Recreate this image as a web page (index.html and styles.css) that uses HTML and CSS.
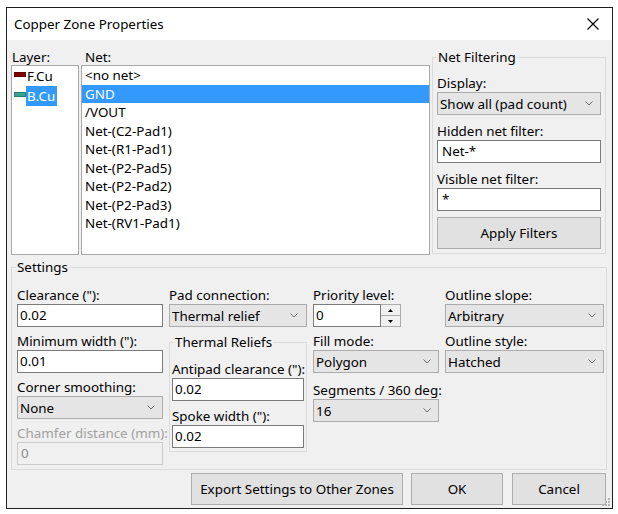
FILE: index.html
```html
<!DOCTYPE html>
<html>
<head>
<meta charset="utf-8">
<title>Copper Zone Properties</title>
<link rel="stylesheet" href="styles.css">
</head>
<body>
<div class="dialog">
  <div class="titlebar">
    <span class="title">Copper Zone Properties</span>
    <svg class="close" width="12" height="12" viewBox="0 0 12 12"><path d="M0.5 0.5 L11.5 11.5 M11.5 0.5 L0.5 11.5" stroke="#000" stroke-width="1.1" fill="none"/></svg>
  </div>
  <div class="content">
    <div class="top">
      <div class="layer-col">
        <div class="top-label">Layer:</div>
        <div class="listbox">
          <div class="layer-item"><span class="swatch swatch-f"></span><span class="layer-name">F.Cu</span></div>
          <div class="layer-item"><span class="swatch swatch-b"></span><span class="layer-name selected">B.Cu</span></div>
        </div>
      </div>
      <div class="net-col">
        <div class="top-label net-label">Net:</div>
        <div class="listbox">
          <div class="net-item">&lt;no net&gt;</div>
          <div class="net-item selected">GND</div>
          <div class="net-item">/VOUT</div>
          <div class="net-item">Net-(C2-Pad1)</div>
          <div class="net-item">Net-(R1-Pad1)</div>
          <div class="net-item">Net-(P2-Pad5)</div>
          <div class="net-item">Net-(P2-Pad2)</div>
          <div class="net-item">Net-(P2-Pad3)</div>
          <div class="net-item">Net-(RV1-Pad1)</div>
        </div>
      </div>
      <fieldset class="group netfilter">
        <legend>Net Filtering</legend>
        <div class="nf-inner">
          <div class="lbl">Display:</div>
          <div class="combo nf-ctrl"><span>Show all (pad count)</span><svg class="chev" width="8" height="5" viewBox="0 0 8 5"><polyline points="0.5,0.5 4,4 7.5,0.5" fill="none" stroke="#6b6b6b" stroke-width="1"/></svg></div>
          <div class="lbl">Hidden net filter:</div>
          <div class="input nf-input nf-ctrl">Net-*</div>
          <div class="lbl">Visible net filter:</div>
          <div class="input nf-input nf-ctrl">*</div>
          <div class="button apply">Apply Filters</div>
        </div>
      </fieldset>
    </div>

    <fieldset class="group settings">
      <legend>Settings</legend>
      <div class="settings-cols">
        <div class="col col1">
          <div class="lbl">Clearance ("):</div>
          <div class="input ctrl">0.02</div>
          <div class="lbl">Minimum width ("):</div>
          <div class="input ctrl">0.01</div>
          <div class="lbl">Corner smoothing:</div>
          <div class="combo ctrl"><span>None</span><svg class="chev" width="8" height="5" viewBox="0 0 8 5"><polyline points="0.5,0.5 4,4 7.5,0.5" fill="none" stroke="#6b6b6b" stroke-width="1"/></svg></div>
          <div class="lbl disabled">Chamfer distance (mm):</div>
          <div class="input ctrl input-disabled">0</div>
        </div>
        <div class="col col2">
          <div class="lbl">Pad connection:</div>
          <div class="combo ctrl"><span>Thermal relief</span><svg class="chev" width="8" height="5" viewBox="0 0 8 5"><polyline points="0.5,0.5 4,4 7.5,0.5" fill="none" stroke="#6b6b6b" stroke-width="1"/></svg></div>
          <fieldset class="group thermal">
            <legend>Thermal Reliefs</legend>
            <div class="thermal-inner">
              <div class="lbl">Antipad clearance ("):</div>
              <div class="input ctrl tr-ctrl">0.02</div>
              <div class="lbl">Spoke width ("):</div>
              <div class="input ctrl">0.02</div>
            </div>
          </fieldset>
        </div>
        <div class="col col3">
          <div class="lbl">Priority level:</div>
          <div class="spin ctrl">
            <div class="input spin-input">0</div>
            <div class="spin-btns">
              <div class="spin-half"><svg width="5" height="3" viewBox="0 0 5 3"><polygon points="2.5,0 5,3 0,3" fill="#000"/></svg></div>
              <div class="spin-half spin-down"><svg width="5" height="3" viewBox="0 0 5 3"><polygon points="0,0 5,0 2.5,3" fill="#000"/></svg></div>
            </div>
          </div>
          <div class="lbl">Fill mode:</div>
          <div class="combo ctrl fill-ctrl"><span>Polygon</span><svg class="chev" width="8" height="5" viewBox="0 0 8 5"><polyline points="0.5,0.5 4,4 7.5,0.5" fill="none" stroke="#6b6b6b" stroke-width="1"/></svg></div>
          <div class="lbl">Segments / 360 deg:</div>
          <div class="combo ctrl"><span>16</span><svg class="chev" width="8" height="5" viewBox="0 0 8 5"><polyline points="0.5,0.5 4,4 7.5,0.5" fill="none" stroke="#6b6b6b" stroke-width="1"/></svg></div>
        </div>
        <div class="col col4">
          <div class="lbl">Outline slope:</div>
          <div class="combo ctrl"><span>Arbitrary</span><svg class="chev" width="8" height="5" viewBox="0 0 8 5"><polyline points="0.5,0.5 4,4 7.5,0.5" fill="none" stroke="#6b6b6b" stroke-width="1"/></svg></div>
          <div class="lbl">Outline style:</div>
          <div class="combo ctrl"><span>Hatched</span><svg class="chev" width="8" height="5" viewBox="0 0 8 5"><polyline points="0.5,0.5 4,4 7.5,0.5" fill="none" stroke="#6b6b6b" stroke-width="1"/></svg></div>
        </div>
      </div>
    </fieldset>

    <div class="buttons">
      <div class="button btn-export">Export Settings to Other Zones</div>
      <div class="button btn-ok">OK</div>
      <div class="button btn-cancel">Cancel</div>
    </div>
  </div>
  <svg class="grip" width="10" height="10" viewBox="0 0 10 10">
    <rect x="7" y="1" width="2" height="2" fill="#b4b4b4"/>
    <rect x="7" y="4" width="2" height="2" fill="#b4b4b4"/>
    <rect x="4" y="4" width="2" height="2" fill="#b4b4b4"/>
    <rect x="7" y="7" width="2" height="2" fill="#b4b4b4"/>
    <rect x="4" y="7" width="2" height="2" fill="#b4b4b4"/>
    <rect x="1" y="7" width="2" height="2" fill="#b4b4b4"/>
  </svg>
</div>
</body>
</html>
```

FILE: styles.css
```css
* { box-sizing: border-box; }
html, body { margin: 0; padding: 0; background: #ffffff; }
body {
  font-family: "Noto Sans", "Open Sans", sans-serif;
  font-size: 13.4px;
  color: #000;
}

.dialog {
  position: relative;
  width: 607px;
  height: 502px;
  margin: 7px 0 0 6px;
  border: 1px solid #1f1f1f;
  background: #f0f0f0;
  display: flex;
  flex-direction: column;
}

.titlebar {
  flex: none;
  height: 32px;
  background: #ffffff;
  display: flex;
  align-items: center;
  justify-content: space-between;
  padding: 0 13px 0 7px;
}
.title { line-height: 18px; }
.close { display: block; }

.content {
  flex: 1;
  display: flex;
  flex-direction: column;
  padding: 9px 5px 0 4px;
}

.top {
  display: flex;
  gap: 2px;
  height: 206px;
  flex: none;
}
.layer-col, .net-col { display: flex; flex-direction: column; flex: none; }
.layer-col { width: 68px; }
.net-col { width: 349px; }
.top-label { height: 16px; line-height: 16px; padding-left: 1px; }
.net-label { padding-left: 4px; }

.listbox {
  flex: 1;
  background: #ffffff;
  border: 1px solid #a9a9a9;
  overflow: hidden;
}

.layer-item {
  display: flex;
  align-items: center;
  height: 20px;
  padding-left: 2px;
}
.swatch {
  width: 12px;
  height: 5px;
  margin-top: -3px;
  flex: none;
}
.swatch-f { background: #840000; border: 1px solid #5a0000; }
.swatch-b { background: #3aa08f; border: 1px solid #2b7f70; }
.layer-name { line-height: 20px; padding: 0 2px 0 1px; }
.layer-name.selected { background: #3399ff; color: #ffffff; }

.net-item {
  height: 18.5px;
  line-height: 18.5px;
  padding-left: 3px;
  white-space: nowrap;
}
.net-item.selected { background: #3399ff; color: #ffffff; }

.group {
  margin: 0;
  padding: 0;
  border: 1px solid #dcdcdc;
  min-width: 0;
}
.group legend {
  padding: 0 1px;
  margin-left: 4px;
  line-height: 16px;
}

.netfilter {
  flex: none;
  width: 174px;
  height: 205px;
  align-self: flex-start;
}
.nf-inner {
  padding: 10px 4px 0 4px;
  display: flex;
  flex-direction: column;
}

.lbl { line-height: 17px; height: 17px; white-space: nowrap; }
.lbl.disabled { color: #a0a0a0; }

.input {
  height: 23px;
  line-height: 21px;
  background: #ffffff;
  border: 1px solid #7a7a7a;
  padding: 0 2px;
  white-space: nowrap;
}
.input-disabled {
  background: #f0f0f0;
  border-color: #cccccc;
  color: #8c8c8c;
  padding-left: 3px;
}
.nf-input { padding-left: 4px; }

.combo {
  height: 23px;
  background: #e5e5e5;
  border: 1px solid #acacac;
  display: flex;
  align-items: center;
  justify-content: space-between;
  padding: 0 7px 0 2px;
  white-space: nowrap;
}
.chev { display: block; flex: none; }

.nf-ctrl { margin-bottom: 8px; }

.button {
  background: #e1e1e1;
  border: 1px solid #adadad;
  display: flex;
  align-items: center;
  justify-content: center;
  white-space: nowrap;
}
.apply { height: 32px; margin-top: -2px; }

.settings {
  flex: none;
  height: 211px;
  margin-top: 4px;
  padding: 0 2px 0 5px;
}
.settings legend { margin-left: -1px; }
.settings-cols {
  display: flex;
  gap: 6px;
  padding-top: 12px;
}
.col { display: flex; flex-direction: column; flex: none; }
.col1 { width: 146px; }
.col2 { width: 138px; }
.col3 { width: 126px; }
.col4 { width: 159px; }
.ctrl { margin-bottom: 6px; }
.fill-ctrl { margin-bottom: 9px; }
.col2 .combo { padding-right: 8px; }

.thermal {
  margin-top: 1px;
  padding: 0 2px 3px 2px;
}
.thermal legend { margin-left: 2px; }
.thermal-inner {
  padding-top: 11px;
  display: flex;
  flex-direction: column;
}
.thermal-inner .ctrl { margin-bottom: 0; }
.thermal-inner .tr-ctrl { margin-bottom: 7px; }

.spin { display: flex; height: 23px; }
.spin-input { width: 68px; margin: 0; }
.spin-btns {
  width: 20px;
  height: 23px;
  display: flex;
  flex-direction: column;
  border: 1px solid #acacac;
  border-left: none;
  background: #f0f0f0;
}
.spin-half {
  flex: 1;
  display: flex;
  align-items: center;
  justify-content: center;
}
.spin-down { border-top: 1px solid #acacac; }
.spin-half svg { display: block; }

.buttons {
  flex: none;
  display: flex;
  justify-content: flex-end;
  margin-top: 3px;
  padding-right: 1px;
  height: 32px;
}
.btn-export { width: 212px; }
.btn-ok { width: 92px; margin-left: 8px; }
.btn-cancel { width: 94px; margin-left: 9px; }

.grip {
  position: absolute;
  right: 1px;
  bottom: 1px;
  display: block;
}
```
